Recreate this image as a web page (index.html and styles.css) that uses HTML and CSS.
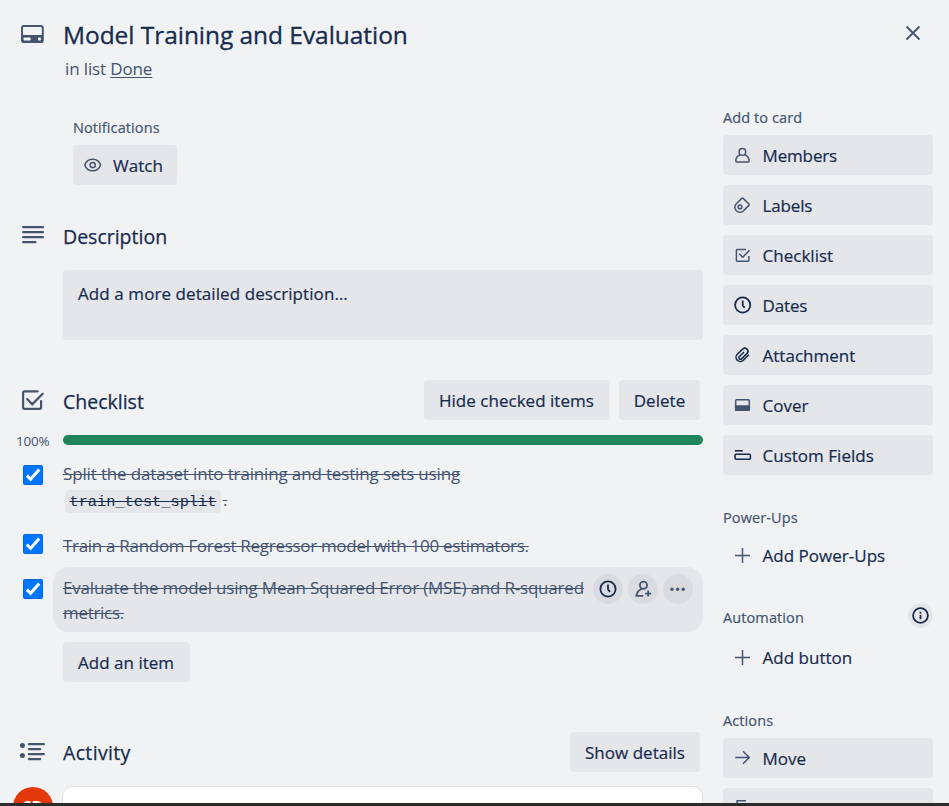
FILE: index.html
```html
<!DOCTYPE html>
<html lang="en">
<head>
<meta charset="utf-8">
<title>Model Training and Evaluation</title>
<link rel="stylesheet" href="styles.css">
</head>
<body>
<main class="dialog">
  <header class="head">
    <svg class="icon-lg" viewBox="0 0 30 30"><rect x="5" y="7" width="20.800" height="16" rx="2" fill="none" stroke="currentColor" stroke-width="1.900"/><path fill="currentColor" fill-rule="evenodd" d="M4.500 16h21.800v6a2 2 0 0 1-2 2H6.500a2 2 0 0 1-2-2zM7.300 18.600a.8.8 0 0 0-.8.8v1.200a.8.8 0 0 0 .8.8h5.600a.8.8 0 0 0 .8-.8v-1.200a.8.8 0 0 0-.8-.8zM21.700 18.600a.6.6 0 0 0-.6.600v1.600a.6.6 0 0 0 .6.600h1.600a.6.6 0 0 0 .6-.6v-1.600a.6.6 0 0 0-.6-.6z"/></svg>
    <div class="head-text">
      <h1>Model Training and Evaluation</h1>
      <p class="in-list">in list <a>Done</a></p>
    </div>
    <svg class="close" viewBox="0 0 20 20"><path d="M3.500 3.500l13 13M16.500 3.500l-13 13"/></svg>
  </header>
  <div class="columns">
    <div class="content">
      <section class="notify">
        <h3 class="w-notif">Notifications</h3>
        <button class="btn watch"><svg class="icon" viewBox="0 0 20 20"><path d="M1.800 10C3 6.300 6 4.200 9.700 4.200S16.300 6.300 17.600 10c-1.300 3.700-4.200 5.800-7.900 5.800S3 13.700 1.800 10z"/><circle cx="9.700" cy="10" r="2.600"/></svg><span>Watch</span></button>
      </section>

      <section class="row desc-head">
        <svg class="icon-lg" viewBox="0 0 30 30"><path class="bar" d="M5.200 7.200h19.700M5.200 12.200h19.700M5.200 17.200h19.700M5.200 22.200h12.200"/></svg>
        <h2>Description</h2>
      </section>
      <div class="desc"><span>Add a more detailed description…</span></div>

      <section class="row check-head">
        <svg class="icon-lg" viewBox="0 0 30 30"><path class="line2" d="M19.700 6.300H6.600a1.500 1.500 0 0 0-1.500 1.500v14.500a1.500 1.500 0 0 0 1.500 1.500h15a1.500 1.500 0 0 0 1.500-1.500V16M9.200 14l5 5.300L24.700 8.700"/></svg>
        <h2>Checklist</h2>
        <button class="btn hide"><span>Hide checked items</span></button>
        <button class="btn del"><span>Delete</span></button>
      </section>
      <div class="progress"><span class="pct">100%</span><div class="track"></div></div>

      <ul class="items">
        <li class="item first">
          <svg class="check" viewBox="0 0 20 20"><rect width="20" height="20" rx="2" fill="#0068e8"/><rect x="1" y="1" width="18" height="18" rx="1" fill="#0075ff"/><path d="M3.800 10.700l3.800 3.600L16.200 4.500"/></svg>
          <div class="label"><span class="t1">Split the dataset into training and testing sets using</span><br><span class="code-line"><code>train_test_split</code><s>.</s></span></div>
        </li>
        <li class="item second">
          <svg class="check" viewBox="0 0 20 20"><rect width="20" height="20" rx="2" fill="#0068e8"/><rect x="1" y="1" width="18" height="18" rx="1" fill="#0075ff"/><path d="M3.800 10.700l3.800 3.600L16.200 4.500"/></svg>
          <div class="label"><span class="t2">Train a Random Forest Regressor model with 100 estimators.</span></div>
        </li>
        <li class="item third">
          <svg class="check" viewBox="0 0 20 20"><rect width="20" height="20" rx="2" fill="#0068e8"/><rect x="1" y="1" width="18" height="18" rx="1" fill="#0075ff"/><path d="M3.800 10.700l3.800 3.600L16.200 4.500"/></svg>
          <div class="label hovered">
            <div class="hover-text"><span class="t3">Evaluate the model using Mean Squared Error (MSE) and R-squared</span><br><span class="t4">metrics.</span></div>
            <div class="tools">
              <i class="round"><svg class="icon dark" viewBox="0 0 20 20"><circle cx="10" cy="10" r="7.600"/><path d="M10 5.500v5l2 2.400"/></svg></i>
              <i class="round"><svg class="icon w2" viewBox="0 0 20 20"><circle cx="10.500" cy="6.300" r="3.600"/><path d="M8.800 10C5.500 11 4 13.500 3.300 16.800h7M15.200 11.600v6M12.200 14.600h6"/></svg></i>
              <i class="round"><svg class="icon" viewBox="0 0 20 20"><g class="dots"><circle cx="4" cy="10.300" r="1.700"/><circle cx="9.600" cy="10.300" r="1.700"/><circle cx="15.200" cy="10.300" r="1.700"/></g></svg></i>
            </div>
          </div>
        </li>
      </ul>
      <button class="btn add-item"><span>Add an item</span></button>

      <section class="row act-head">
        <svg class="icon-lg" viewBox="0 0 30 30"><circle cx="4.400" cy="8.500" r="2.500" fill="currentColor"/><circle cx="4.400" cy="18.500" r="2.500" fill="currentColor"/><path class="bar" d="M10.900 7.200h14.900M10.900 12.200h11.200M10.900 17.200h14.900M10.900 22.200h11.200"/></svg>
        <h2>Activity</h2>
        <button class="btn show"><span>Show details</span></button>
      </section>
      <div class="comment"><div class="avatar">SD</div><div class="box"></div></div>
    </div>

    <aside class="side">
      <h3 class="w-add">Add to card</h3>
      <nav class="stack">
        <button class="btn sb"><svg class="icon" viewBox="0 0 20 20"><circle cx="10.400" cy="6.900" r="3.300"/><path d="M8 9.800C5.500 10.800 3.800 13 3.800 16a1 1 0 0 0 1 1h11.300a1 1 0 0 0 1-1c0-3-1.700-5.200-4.200-6.200"/></svg><span class="tight">Members</span></button>
        <button class="btn sb"><svg class="icon" viewBox="0 0 20 20"><path d="M9.800 3.400 4.800 8.200C2.300 10.400 2.300 13.600 4.300 15.700s5.500 2 7.600-.3l5-5a1 1 0 0 0 0-1.400L11.200 3.400a1 1 0 0 0-1.400 0z"/><circle cx="8" cy="11.900" r="1.900"/></svg><span class="tight">Labels</span></button>
        <button class="btn sb"><svg class="icon" viewBox="0 0 20 20"><path d="M14 4.400H5.300a.9.9 0 0 0-.9.900v10a.9.900 0 0 0 .9.900H16a.9.900 0 0 0 .9-.9V11M7.200 8.700l3.500 3.600L17.400 5.300"/></svg><span>Checklist</span></button>
        <button class="btn sb"><svg class="icon dark" viewBox="0 0 20 20"><circle cx="10.700" cy="10" r="7.600"/><path d="M10.700 5.500v5l2 2.400"/></svg><span class="tight">Dates</span></button>
        <button class="btn sb"><svg class="icon dark clip" viewBox="0 0 20 20"><path d="M16.900 9.700l-5.600 5.600a4.200 4.200 0 0 1-6-6l5.300-5.100a3 3 0 0 1 4.500 4.200l-5.500 5.500a1.500 1.500 0 0 1-2.300-2.200l4.700-4.700"/></svg><span>Attachment</span></button>
        <button class="btn sb"><svg class="icon" viewBox="0 0 20 20"><rect x="3.700" y="4.700" width="13.600" height="10.600" rx="1"/><path fill="currentColor" d="M3.700 11h13.600v4.300H3.700z"/></svg><span>Cover</span></button>
        <button class="btn sb"><svg class="icon dark clip" viewBox="0 0 20 20"><path d="M2.800 5.800h8"/><rect x="3.100" y="9.200" width="15.300" height="5" rx="1"/></svg><span>Custom Fields</span></button>
      </nav>
      <h3 class="w-power h-power">Power-Ups</h3>
      <button class="btn sb ghost"><svg class="icon" viewBox="0 0 20 20"><path d="M10.500 3v15M3 10.500h15"/></svg><span>Add Power-Ups</span></button>
      <div class="auto"><h3 class="w-auto">Automation</h3><i class="info"><svg class="icon dark" viewBox="0 0 20 20"><circle cx="9.500" cy="9.500" r="7.400"/><path d="M9.500 8.800v4.400M9.500 5.800v1.600"/></svg></i></div>
      <button class="btn sb ghost"><svg class="icon" viewBox="0 0 20 20"><path d="M10.500 3v15M3 10.500h15"/></svg><span>Add button</span></button>
      <h3 class="w-act h-act">Actions</h3>
      <nav class="stack">
        <button class="btn sb"><svg class="icon" viewBox="0 0 20 20"><path d="M3.200 9.500h14M11 3.200l6.300 6.300L11 15.800"/></svg><span>Move</span></button>
        <button class="btn sb"><svg class="icon" viewBox="0 0 20 20"><path d="M14 2.800H5V12M16 6.200H8.500v11"/></svg><span>Copy</span></button>
      </nav>
    </aside>
  </div>
</main>
<footer class="edge"></footer>
</body>
</html>
```

FILE: styles.css
```css
* { box-sizing: border-box; }
html, body { margin: 0; height: 806px; overflow: hidden; }
body { background: #f1f2f4; color: #172b4d; font-family: "Open Sans", "Noto Sans", sans-serif; font-size: 17px; letter-spacing: 0; }
h1, h2, h3, p, ul { margin: 0; padding: 0; font-weight: 400; }
span, h1, h2, h3 { white-space: nowrap; }
i { font-style: normal; }
.dialog { height: 803px; overflow: hidden; }
.edge { height: 3px; background: #2d2b2a; }

.head { display: flex; height: 110px; padding: 19px 26px 0 17px; }
.head-text { flex: 1; margin-left: 16px; }
h1 { font-size: 24.5px; line-height: 32px; font-weight: 500; letter-spacing: -0.05px; -webkit-text-stroke: 0.3px currentColor; }
.in-list { margin: 7px 0 0 2px; line-height: 22px; color: #44546f; font-size: 17px; letter-spacing: -0.13px; }
.in-list a { text-decoration: underline; text-underline-offset: 2px; text-decoration-thickness: 1px; }
.close { width: 20px; height: 20px; margin-top: 4px; fill: none; stroke: #44546f; stroke-width: 1.8; }
.icon-lg { flex: none; width: 30px; height: 30px; color: #44546f; }
.bar { stroke: currentColor; stroke-width: 2.3; stroke-linecap: round; fill: none; }
.line2 { stroke: currentColor; stroke-width: 2.2; stroke-linecap: round; fill: none; }

.columns { display: grid; grid-template-columns: 640px 210px; column-gap: 20px; margin-left: 63px; }
h3 { font-size: 14.5px; line-height: 18px; color: #44546f; font-weight: 500; letter-spacing: 0.1px; -webkit-text-stroke: 0.2px currentColor; }
h2 { font-size: 19.5px; line-height: 26px; font-weight: 500; letter-spacing: 0; -webkit-text-stroke: 0.25px currentColor; }

.btn { display: flex; align-items: center; height: 40px; border: 0; border-radius: 4px; margin: 0; padding: 1px 15px 0; background: #e4e6ea; color: #172b4d; font: inherit; font-weight: 500; letter-spacing: 0.02px; }
.btn span, .desc span { -webkit-text-stroke: 0.2px currentColor; }
.btn .tight { letter-spacing: -0.15px; }
.btn .icon { margin-top: -1px; }
.icon { flex: none; width: 20px; height: 20px; fill: none; stroke: currentColor; stroke-width: 1.5; color: #44546f; stroke-linejoin: round; }
.dark { color: #172b4d; stroke-width: 1.8; }
.clip { stroke-width: 1.6; }
.w2 { stroke-width: 1.8; }
.dots { fill: currentColor; stroke: none; }

.notify { margin: 9px 0 0 10px; }
.notify h3 { margin-bottom: 8px; }
.watch { width: 104px; padding-left: 10px; gap: 10px; }

.row { display: flex; align-items: center; margin-left: -45px; width: 682px; }
.row h2 { margin-left: 15px; flex: 1; }
.desc-head { height: 30px; margin-top: 36px; }
.desc-head .icon-lg { margin-top: -2px; }
.desc-head h2, .act-head h2 { padding-top: 2px; }
.check-head h2 { padding-top: 4px; }
.desc { height: 70px; margin-top: 19px; padding: 13px 15px; border-radius: 4px; background: #e4e6ea; line-height: 22px; font-weight: 500; letter-spacing: 0.08px; }
.check-head { height: 40px; margin-top: 40px; }
.hide { width: 185px; margin-right: 10px; }
.del, .show { justify-content: center; padding-left: 0; padding-right: 0; }
.del { width: 81px; }
.progress { display: flex; align-items: center; height: 12px; margin: 14px 0 0 -47px; }
.pct { width: 47px; font-size: 13.5px; color: #44546f; letter-spacing: -0.2px; padding-top: 1px; }
.track { width: 640px; height: 10px; border-radius: 5px; background: #1f845a; }

.items { list-style: none; margin: 15px 0 0 -40px; color: #44546f; }
.item { display: flex; line-height: 25px; }
.check { flex: none; width: 20px; height: 20px; margin-top: 4px; fill: none; stroke: #fff; stroke-width: 0; }
.check path { stroke-width: 3; }
.label { margin-left: 20px; }
.t1, .t2, .t3, .t4, s { text-decoration: line-through; text-decoration-thickness: 1px; }
.t1 { letter-spacing: -0.15px; }
.t2, .t4 { letter-spacing: -0.3px; }
.t3 { letter-spacing: -0.19px; }
.first { height: 69px; }
.second { height: 37px; }
.second .label { padding-top: 3px; }
.third { height: 65px; }
.third .check { margin-top: 12px; }
.code-line { display: flex; align-items: center; height: 30px; margin-left: 2px; }
.code-line s { margin: -4px 0 0 2px; }
code { height: 23px; padding: 0 4.500px; border-radius: 4px; background: #e4e6ea; color: #172b4d; font: 15.300px/24px "Liberation Mono", monospace; letter-spacing: 0; text-decoration: line-through; text-decoration-thickness: 1px; }
.hovered { display: flex; width: 650px; height: 65px; margin-left: 10px; padding: 8px 10px 0 10px; border-radius: 16px; background: #e4e6ea; }
.hover-text { flex: 1; }
.tools { display: flex; gap: 5px; margin-top: -1px; }
.round { display: flex; align-items: center; justify-content: center; width: 30px; height: 30px; border-radius: 50%; background: #d9dbe0; }
.add-item { margin-top: 10px; width: 127px; }
.act-head { height: 40px; margin-top: 50px; }
.act-head h2 { letter-spacing: 0.35px; }
.show { width: 130px; }
.comment { display: flex; margin: 14px 0 0 -50px; }
.avatar { width: 40px; height: 40px; margin-top: 1px; border-radius: 50%; background: #e2380a; color: #fff; font-size: 16px; font-weight: 700; line-height: 40px; text-align: center; }
.box { width: 642px; height: 50px; margin-left: 9px; border: 1px solid #dfe1e6; border-radius: 10px; background: #fff; }

.side { padding-top: 0; }
.side .w-add { margin: -1px 0 8px; }
.stack { display: flex; flex-direction: column; gap: 10px; }
.sb { width: 210px; padding-left: 9px; gap: 10.500px; }
.ghost { background: none; }
.h-power { margin: 34px 0 8px; }
.auto { display: flex; justify-content: space-between; height: 25px; margin: 28px 0 9px; }
.auto h3 { padding-top: 6px; }
.info { display: flex; align-items: center; justify-content: center; width: 25px; height: 25px; border-radius: 50%; background: #e4e6ea; }
.h-act { margin: 35px 0 8px; }
```
